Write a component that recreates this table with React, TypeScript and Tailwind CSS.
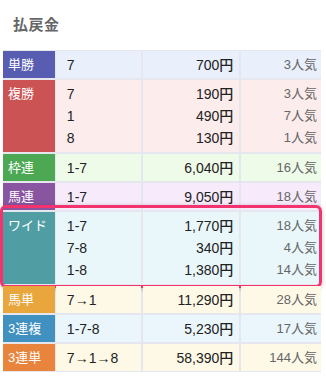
import React from 'react';

type Row = {
  label: string;
  labelBg: string;
  rowBg: string;
  items: [string, string, string][];
  highlight?: boolean;
};

const rows: Row[] = [
  { label: '単勝', labelBg: 'bg-[#585db2]', rowBg: 'bg-[#e9effb]', items: [['7', '700円', '3人気']] },
  {
    label: '複勝',
    labelBg: 'bg-[#cc5353]',
    rowBg: 'bg-[#fdecec]',
    items: [
      ['7', '190円', '3人気'],
      ['1', '490円', '7人気'],
      ['8', '130円', '1人気'],
    ],
  },
  { label: '枠連', labelBg: 'bg-[#4ca852]', rowBg: 'bg-[#effbe9]', items: [['1-7', '6,040円', '16人気']] },
  { label: '馬連', labelBg: 'bg-[#8a55a0]', rowBg: 'bg-[#f7eafb]', items: [['1-7', '9,050円', '18人気']] },
  {
    label: 'ワイド',
    labelBg: 'bg-[#509ea3]',
    rowBg: 'bg-[#e9f7fb]',
    highlight: true,
    items: [
      ['1-7', '1,770円', '18人気'],
      ['7-8', '340円', '4人気'],
      ['1-8', '1,380円', '14人気'],
    ],
  },
  { label: '馬単', labelBg: 'bg-[#e8a63c]', rowBg: 'bg-[#fef9e7]', items: [['7→1', '11,290円', '28人気']] },
  { label: '3連複', labelBg: 'bg-[#4090c0]', rowBg: 'bg-[#eaf6fc]', items: [['1-7-8', '5,230円', '17人気']] },
  { label: '3連単', labelBg: 'bg-[#e8843c]', rowBg: 'bg-[#fef9e7]', items: [['7→1→8', '58,390円', '144人気']] },
];

const PayoutRow: React.FC<{ row: Row }> = ({ row }) => {
  const multi = row.items.length > 1;
  const cell = multi ? 'pt-[3px] pb-[3px]' : 'h-[27px] flex flex-col justify-center';
  return (
    <div className="relative flex gap-[2px]">
      {/* label */}
      <div className={`w-[52px] mr-[-1px] ${row.labelBg} text-white text-[13px] pl-[5px] ${cell}`}>
        <div className="leading-[22px]">{row.label}</div>
      </div>
      <div className={`w-[85px] ${row.rowBg} text-[#222] text-[14px] pl-[11px] ${cell}`}>
        {row.items.map((it, i) => (
          <div key={i} className="leading-[22px]">{it[0]}</div>
        ))}
      </div>
      <div className={`w-[97px] ${row.rowBg} text-[#222] text-[14px] font-medium text-right pr-[6px] ${cell}`}>
        {row.items.map((it, i) => (
          <div key={i} className="leading-[22px]">{it[1]}</div>
        ))}
      </div>
      <div className={`w-[80px] ${row.rowBg} text-[#666] text-[13px] text-right pr-[4px] ${cell}`}>
        {row.items.map((it, i) => (
          <div key={i} className="leading-[22px]">{it[2]}</div>
        ))}
      </div>

      {row.highlight && (
        <div className="absolute left-[-3px] right-[-1px] top-[-7px] bottom-[-4px] border-[3px] border-[#f2336e] rounded-[6px] shadow-[0_1px_4px_rgba(0,0,0,0.25)] pointer-events-none" />
      )}
    </div>
  );
};

export default function App() {
  return (
    <div
      className="w-[326px] h-[378px] bg-white overflow-hidden"
      style={{ fontFamily: '"Liberation Sans", "Noto Sans CJK JP", sans-serif' }}
    >
      {/* Header */}
      <div className="h-[50px] pl-[13px] pt-[14px]">
        <h2 className="text-[15px] leading-[22px] font-bold text-[#666] tracking-[0.5px]">払戻金</h2>
      </div>

      {/* Payout table */}
      <div className="ml-[3px] w-[318px] bg-[#e6e6ee] pt-[1px] pb-[1px] flex flex-col gap-[2px]">
        {rows.map((r) => (
          <PayoutRow key={r.label} row={r} />
        ))}
      </div>
    </div>
  );
}
